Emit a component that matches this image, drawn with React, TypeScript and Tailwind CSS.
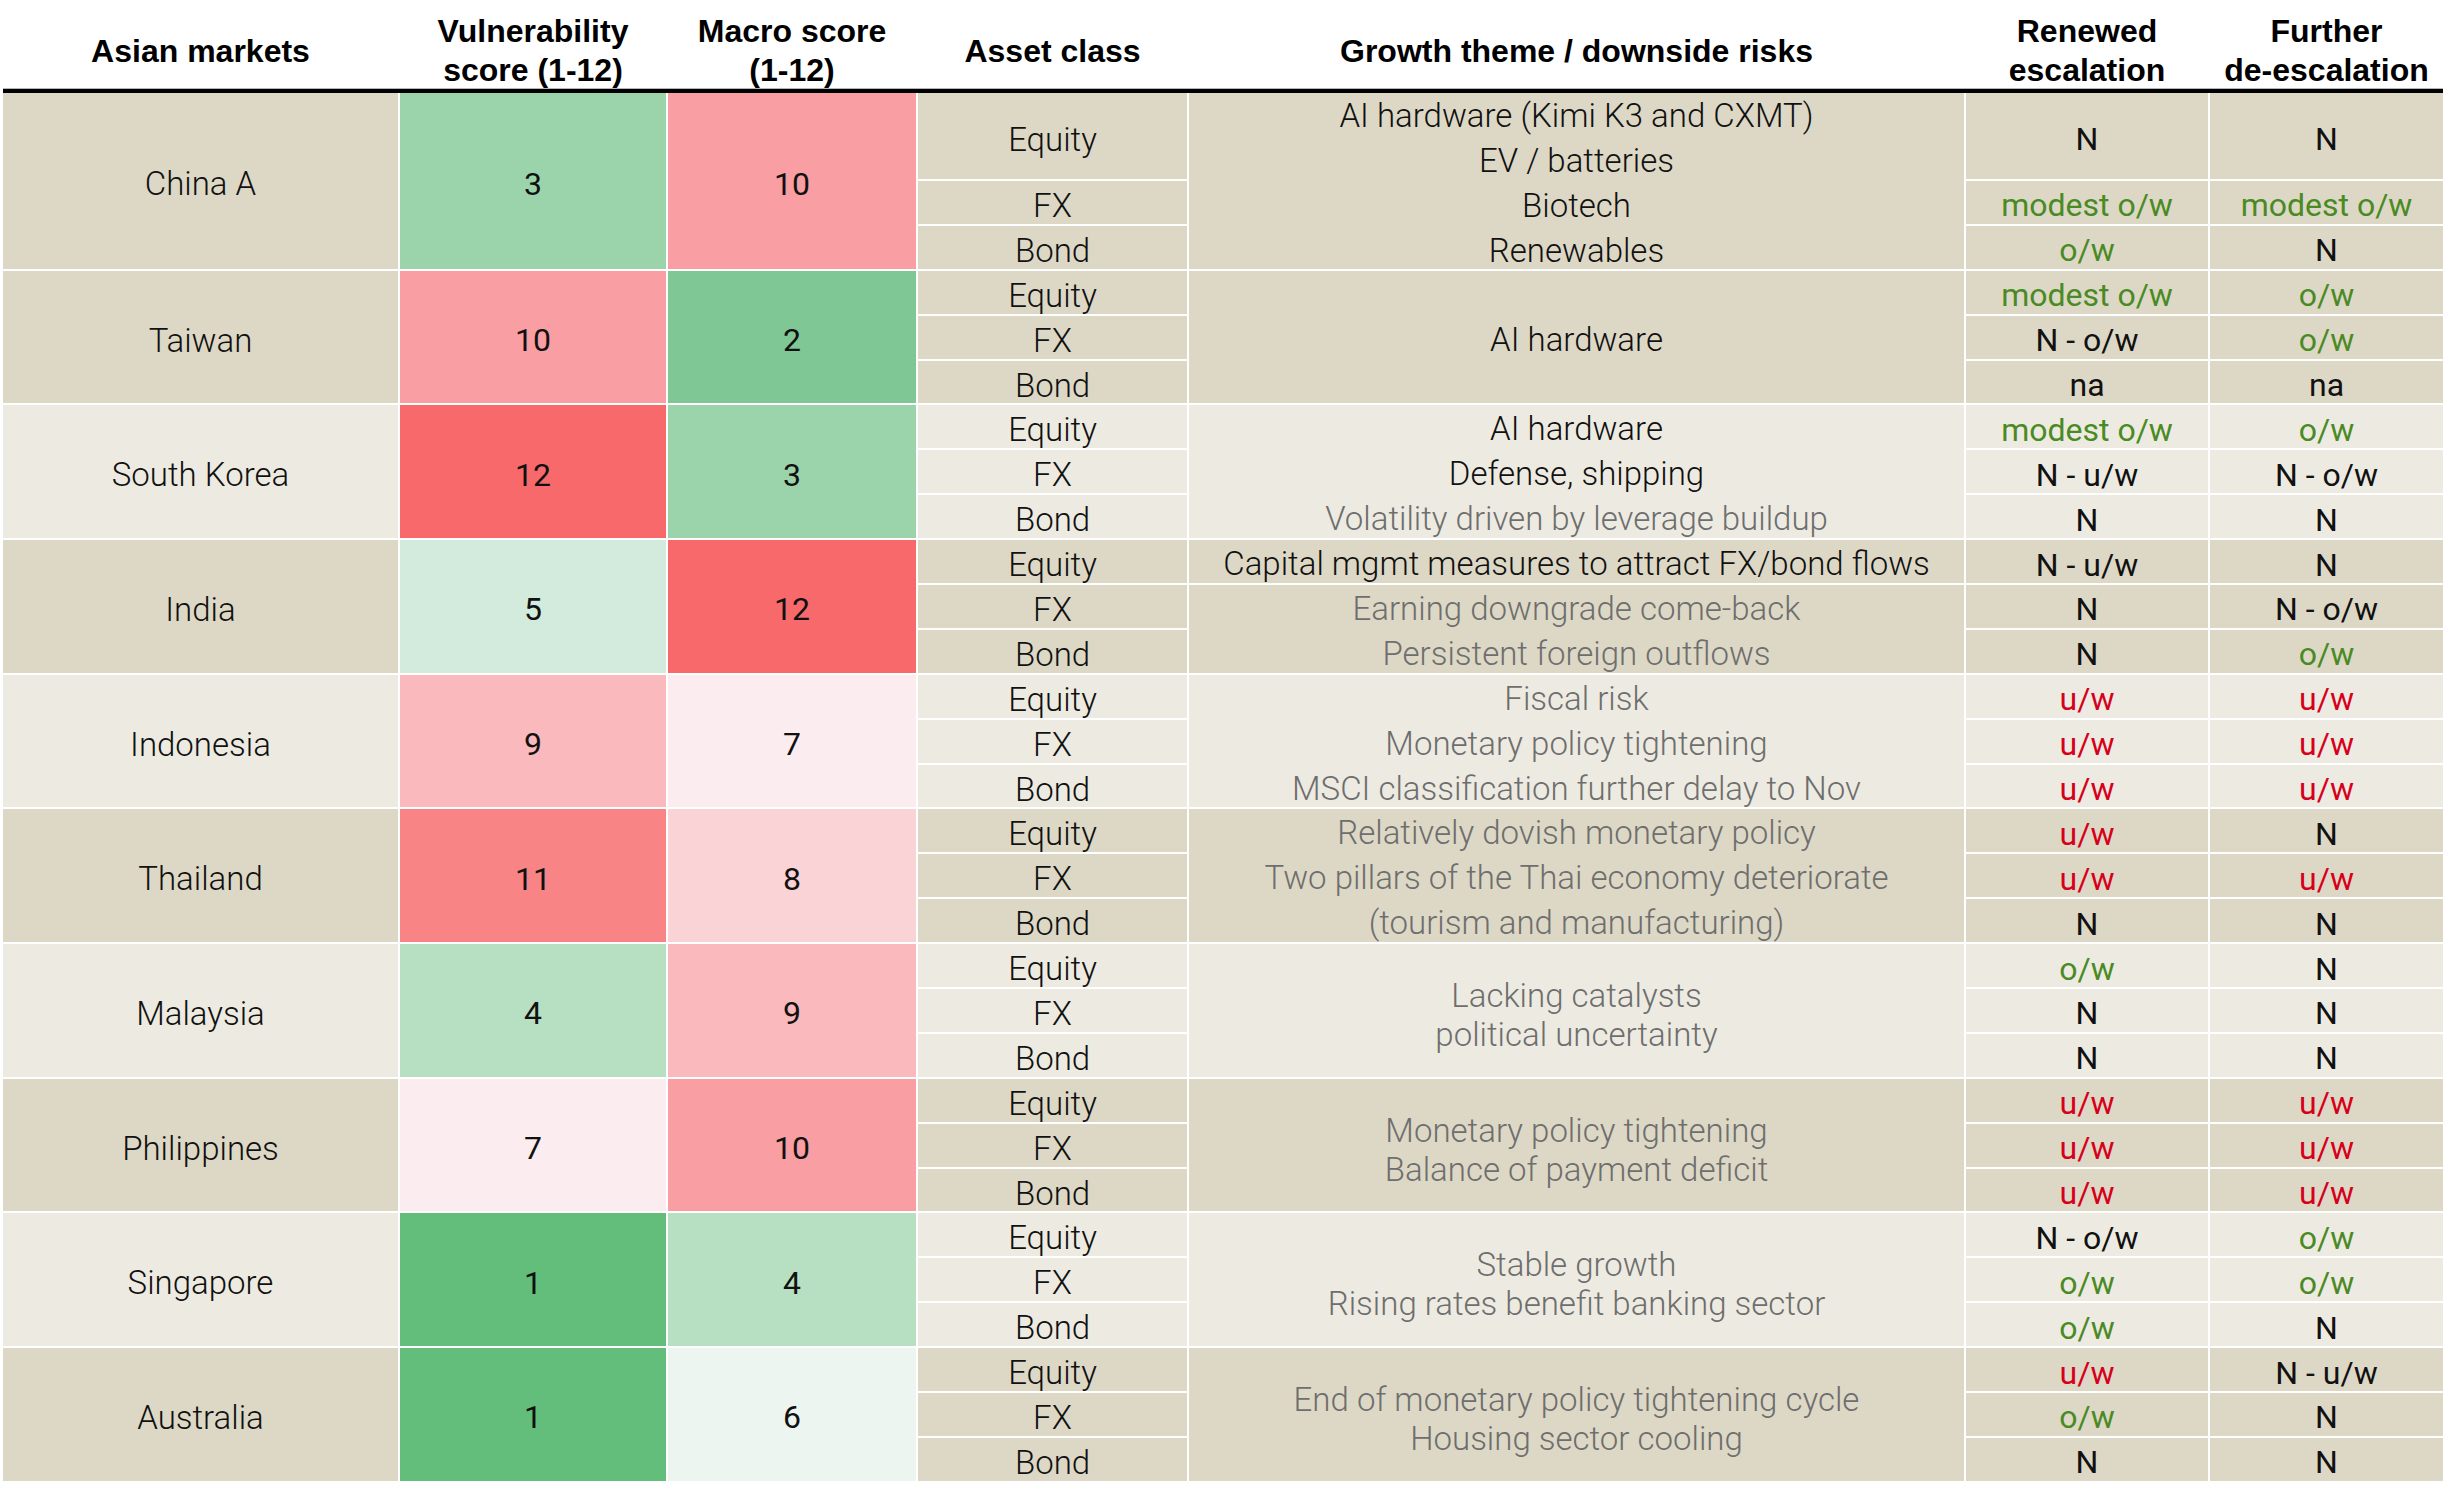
const SCORE_BG: Record<number, string> = {
  1: 'bg-[#63be7b]',
  2: 'bg-[#7fc794]',
  3: 'bg-[#9bd4ab]',
  4: 'bg-[#b7e0c3]',
  5: 'bg-[#d3ebdc]',
  6: 'bg-[#edf5f1]',
  7: 'bg-[#fbedef]',
  8: 'bg-[#fad3d7]',
  9: 'bg-[#fab9bc]',
  10: 'bg-[#f99ea2]',
  11: 'bg-[#f98486]',
  12: 'bg-[#f8696b]',
}

const SPAN: Record<number, string> = {
  1: 'row-span-1',
  2: 'row-span-2',
  3: 'row-span-3',
}

const TONE = {
  k: 'text-[#111111]',
  g: 'text-[#4a8a24]',
  r: 'text-[#d6001c]',
}

type Tone = keyof typeof TONE
type Call = [string, Tone]
type Line = { text: string; muted?: boolean }
type Theme = { span: number; lines: Line[]; pitch?: 'wide' | 'tight' }

type Market = {
  name: string
  vulnerability: number
  macro: number
  dark: boolean
  themes: Theme[]
  renewed: Call[]
  further: Call[]
}

const ink = (text: string): Line => ({ text })
const grey = (text: string): Line => ({ text, muted: true })

const markets: Market[] = [
  {
    name: 'China A',
    vulnerability: 3,
    macro: 10,
    dark: true,
    themes: [
      {
        span: 3,
        lines: [ink('AI hardware (Kimi K3 and CXMT)'), ink('EV / batteries'), ink('Biotech'), ink('Renewables')],
      },
    ],
    renewed: [['N', 'k'], ['modest o/w', 'g'], ['o/w', 'g']],
    further: [['N', 'k'], ['modest o/w', 'g'], ['N', 'k']],
  },
  {
    name: 'Taiwan',
    vulnerability: 10,
    macro: 2,
    dark: true,
    themes: [{ span: 3, lines: [ink('AI hardware')] }],
    renewed: [['modest o/w', 'g'], ['N - o/w', 'k'], ['na', 'k']],
    further: [['o/w', 'g'], ['o/w', 'g'], ['na', 'k']],
  },
  {
    name: 'South Korea',
    vulnerability: 12,
    macro: 3,
    dark: false,
    themes: [
      {
        span: 3,
        lines: [ink('AI hardware'), ink('Defense, shipping'), grey('Volatility driven by leverage buildup')],
      },
    ],
    renewed: [['modest o/w', 'g'], ['N - u/w', 'k'], ['N', 'k']],
    further: [['o/w', 'g'], ['N - o/w', 'k'], ['N', 'k']],
  },
  {
    name: 'India',
    vulnerability: 5,
    macro: 12,
    dark: true,
    themes: [
      { span: 1, lines: [ink('Capital mgmt measures to attract FX/bond flows')] },
      { span: 2, lines: [grey('Earning downgrade come-back'), grey('Persistent foreign outflows')] },
    ],
    renewed: [['N - u/w', 'k'], ['N', 'k'], ['N', 'k']],
    further: [['N', 'k'], ['N - o/w', 'k'], ['o/w', 'g']],
  },
  {
    name: 'Indonesia',
    vulnerability: 9,
    macro: 7,
    dark: false,
    themes: [
      {
        span: 3,
        lines: [grey('Fiscal risk'), grey('Monetary policy tightening'), grey('MSCI classification further delay to Nov')],
      },
    ],
    renewed: [['u/w', 'r'], ['u/w', 'r'], ['u/w', 'r']],
    further: [['u/w', 'r'], ['u/w', 'r'], ['u/w', 'r']],
  },
  {
    name: 'Thailand',
    vulnerability: 11,
    macro: 8,
    dark: true,
    themes: [
      {
        span: 3,
        lines: [
          grey('Relatively dovish monetary policy'),
          grey('Two pillars of the Thai economy deteriorate'),
          grey('(tourism and manufacturing)'),
        ],
      },
    ],
    renewed: [['u/w', 'r'], ['u/w', 'r'], ['N', 'k']],
    further: [['N', 'k'], ['u/w', 'r'], ['N', 'k']],
  },
  {
    name: 'Malaysia',
    vulnerability: 4,
    macro: 9,
    dark: false,
    themes: [{ span: 3, pitch: 'tight', lines: [grey('Lacking catalysts'), grey('political uncertainty')] }],
    renewed: [['o/w', 'g'], ['N', 'k'], ['N', 'k']],
    further: [['N', 'k'], ['N', 'k'], ['N', 'k']],
  },
  {
    name: 'Philippines',
    vulnerability: 7,
    macro: 10,
    dark: true,
    themes: [
      { span: 3, pitch: 'tight', lines: [grey('Monetary policy tightening'), grey('Balance of payment deficit')] },
    ],
    renewed: [['u/w', 'r'], ['u/w', 'r'], ['u/w', 'r']],
    further: [['u/w', 'r'], ['u/w', 'r'], ['u/w', 'r']],
  },
  {
    name: 'Singapore',
    vulnerability: 1,
    macro: 4,
    dark: false,
    themes: [
      { span: 3, pitch: 'tight', lines: [grey('Stable growth'), grey('Rising rates benefit banking sector')] },
    ],
    renewed: [['N - o/w', 'k'], ['o/w', 'g'], ['o/w', 'g']],
    further: [['o/w', 'g'], ['o/w', 'g'], ['N', 'k']],
  },
  {
    name: 'Australia',
    vulnerability: 1,
    macro: 6,
    dark: true,
    themes: [
      {
        span: 3,
        pitch: 'tight',
        lines: [grey('End of monetary policy tightening cycle'), grey('Housing sector cooling')],
      },
    ],
    renewed: [['u/w', 'r'], ['o/w', 'g'], ['N', 'k']],
    further: [['N - u/w', 'k'], ['N', 'k'], ['N', 'k']],
  },
]

const ASSETS = ['Equity', 'FX', 'Bond']

const COLS = 'grid-cols-[395px_266px_248px_269px_775px_242px_233px]'
const LIGHT_FONT = "font-['Roboto',sans-serif] font-light text-[33px]"
const PLAIN_FONT = "font-['Roboto',sans-serif] font-normal text-[32px]"
const CELL = 'flex items-center justify-center pt-[6px]'

function HeaderCell({ children }: { children: React.ReactNode }) {
  return <div className="flex items-center justify-center text-center">{children}</div>
}

function MarketBlock({ market }: { market: Market }) {
  const bg = market.dark ? 'bg-[#ddd8c5]' : 'bg-[#edebe1]'

  const cells: React.ReactNode[] = []

  cells.push(
    <div key="name" className={`row-span-3 ${CELL} ${bg} ${LIGHT_FONT} text-[#111111]`}>
      {market.name}
    </div>,
    <div key="vul" className={`row-span-3 ${CELL} ${SCORE_BG[market.vulnerability]} ${PLAIN_FONT} text-[#111111]`}>
      {market.vulnerability}
    </div>,
    <div key="mac" className={`row-span-3 ${CELL} ${SCORE_BG[market.macro]} ${PLAIN_FONT} text-[#111111]`}>
      {market.macro}
    </div>,
  )

  // themes start on a sub-row; walk the three sub-rows in table order
  let themeRow = 0
  const themeStarts: Record<number, Theme> = {}
  market.themes.forEach((t) => {
    themeStarts[themeRow] = t
    themeRow += t.span
  })

  ASSETS.forEach((asset, i) => {
    cells.push(
      <div key={`a${i}`} className={`${CELL} ${bg} ${LIGHT_FONT} text-[#111111]`}>
        {asset}
      </div>,
    )
    const theme = themeStarts[i]
    if (theme) {
      cells.push(
        <div
          key={`t${i}`}
          className={`${SPAN[theme.span]} ${CELL} flex-col text-center ${bg} ${LIGHT_FONT} ${
            theme.pitch === 'tight' ? 'leading-[39px] pt-[9px]' : 'leading-[44.9px]'
          }`}
        >
          {theme.lines.map((line) => (
            <span key={line.text} className={line.muted ? 'text-[#6e6e6e]' : 'text-[#111111]'}>
              {line.text}
            </span>
          ))}
        </div>,
      )
    }
    const [r, rt] = market.renewed[i]
    const [f, ft] = market.further[i]
    cells.push(
      <div key={`r${i}`} className={`${CELL} ${bg} ${PLAIN_FONT} ${TONE[rt]}`}>
        {r}
      </div>,
      <div key={`f${i}`} className={`${CELL} ${bg} ${PLAIN_FONT} ${TONE[ft]}`}>
        {f}
      </div>,
    )
  })

  return <>{cells}</>
}

export default function App() {
  return (
    <div className="min-h-screen w-full bg-white">
      <div className="ml-[3px] w-[2440px]">
        <div
          className={`grid h-[88px] ${COLS} gap-x-[2px] pt-[12px] font-['Liberation_Sans',Arial,sans-serif] text-[32px] font-bold leading-[39px] text-black`}
        >
          <HeaderCell>Asian markets</HeaderCell>
          <HeaderCell>
            Vulnerability
            <br />
            score (1-12)
          </HeaderCell>
          <HeaderCell>
            Macro score
            <br />
            (1-12)
          </HeaderCell>
          <HeaderCell>Asset class</HeaderCell>
          <HeaderCell>Growth theme / downside risks</HeaderCell>
          <HeaderCell>
            Renewed
            <br />
            escalation
          </HeaderCell>
          <HeaderCell>
            Further
            <br />
            de-escalation
          </HeaderCell>
        </div>
        <div className="h-[5px] border-t border-[#b5b5b5] bg-black" />
        <div className={`grid ${COLS} grid-rows-[86px_repeat(29,42.9px)] gap-[2px] bg-white leading-none`}>
          {markets.map((m) => (
            <MarketBlock key={m.name} market={m} />
          ))}
        </div>
      </div>
    </div>
  )
}
